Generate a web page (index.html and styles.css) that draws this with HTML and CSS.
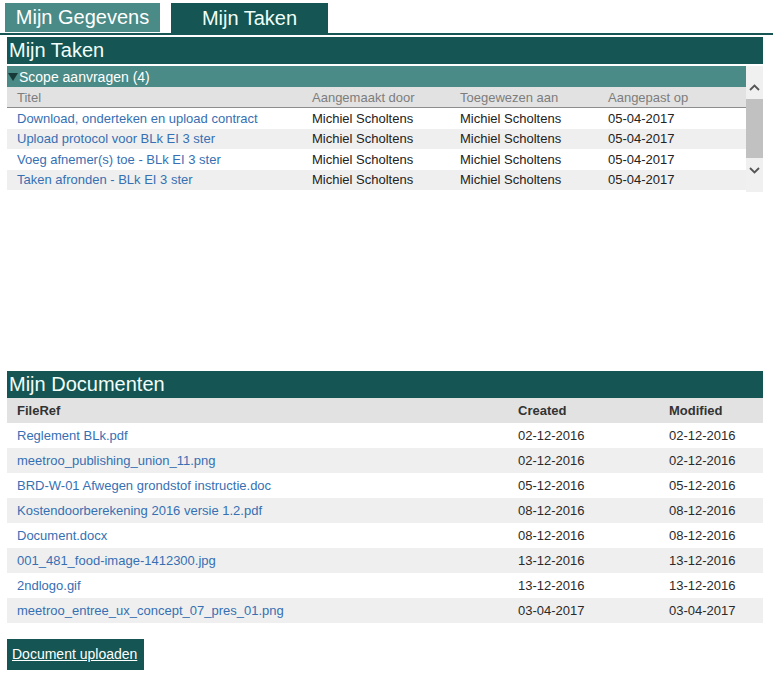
FILE: index.html
```html
<!DOCTYPE html>
<html lang="nl">
<head>
<meta charset="utf-8">
<title>Mijn Taken</title>
<link rel="stylesheet" href="styles.css">
</head>
<body>
<nav class="tabbar">
  <a class="tab tab-inactive">Mijn Gegevens</a>
  <a class="tab tab-active">Mijn Taken</a>
</nav>

<section class="panel tasks">
  <h2 class="panel-title">Mijn Taken</h2>
  <div class="scroll-wrap">
    <div class="scroll-content">
      <div class="group-bar"><span class="caret"></span>Scope aanvragen (4)</div>
      <div class="trow thead">
        <div>Titel</div><div>Aangemaakt door</div><div>Toegewezen aan</div><div>Aangepast op</div>
      </div>
      <div class="trow">
        <a class="link">Download, onderteken en upload contract</a><div>Michiel Scholtens</div><div>Michiel Scholtens</div><div>05-04-2017</div>
      </div>
      <div class="trow alt">
        <a class="link">Upload protocol voor BLk EI 3 ster</a><div>Michiel Scholtens</div><div>Michiel Scholtens</div><div>05-04-2017</div>
      </div>
      <div class="trow">
        <a class="link">Voeg afnemer(s) toe - BLk EI 3 ster</a><div>Michiel Scholtens</div><div>Michiel Scholtens</div><div>05-04-2017</div>
      </div>
      <div class="trow alt">
        <a class="link">Taken afronden - BLk EI 3 ster</a><div>Michiel Scholtens</div><div>Michiel Scholtens</div><div>05-04-2017</div>
      </div>
    </div>
    <div class="scrollbar">
      <svg class="arrow arrow-up" width="11" height="7" viewBox="0 0 11 7"><path d="M1 6 L5.5 1.5 L10 6" fill="none" stroke="#555" stroke-width="1.8"/></svg>
      <div class="track"><div class="thumb"></div></div>
      <svg class="arrow arrow-down" width="11" height="7" viewBox="0 0 11 7"><path d="M1 1 L5.5 5.5 L10 1" fill="none" stroke="#555" stroke-width="1.8"/></svg>
    </div>
  </div>
</section>

<section class="panel docs">
  <h2 class="panel-title">Mijn Documenten</h2>
  <div class="drow dhead"><div>FileRef</div><div>Created</div><div>Modified</div></div>
  <div class="drow"><a class="link">Reglement BLk.pdf</a><div>02-12-2016</div><div>02-12-2016</div></div>
  <div class="drow alt"><a class="link">meetroo_publishing_union_11.png</a><div>02-12-2016</div><div>02-12-2016</div></div>
  <div class="drow"><a class="link">BRD-W-01 Afwegen grondstof instructie.doc</a><div>05-12-2016</div><div>05-12-2016</div></div>
  <div class="drow alt"><a class="link">Kostendoorberekening 2016 versie 1.2.pdf</a><div>08-12-2016</div><div>08-12-2016</div></div>
  <div class="drow"><a class="link">Document.docx</a><div>08-12-2016</div><div>08-12-2016</div></div>
  <div class="drow alt"><a class="link">001_481_food-image-1412300.jpg</a><div>13-12-2016</div><div>13-12-2016</div></div>
  <div class="drow"><a class="link">2ndlogo.gif</a><div>13-12-2016</div><div>13-12-2016</div></div>
  <div class="drow alt"><a class="link">meetroo_entree_ux_concept_07_pres_01.png</a><div>03-04-2017</div><div>03-04-2017</div></div>
  <div class="actions"><a class="btn">Document uploaden</a></div>
</section>
</body>
</html>
```

FILE: styles.css
```css
* { box-sizing: border-box; }
html, body { margin: 0; padding: 0; background: #fff; }
body {
  font-family: "Liberation Sans", Arial, sans-serif;
  color: #222;
  width: 773px;
}

.tabbar {
  display: flex;
  align-items: flex-start;
  gap: 11px;
  padding: 3px 0 0 5px;
  height: 35px;
  border-bottom: 2px solid #155553;
}
.tab {
  display: flex;
  align-items: center;
  justify-content: center;
  font-size: 20px;
  color: #fff;
}
.tab-inactive {
  background: #4a8a87;
  height: 29px;
  width: 155px;
}
.tab-active {
  background: #155553;
  height: 30px;
  width: 157px;
  color: #effff8;
}

.panel { margin: 0 10px 0 7px; }
.tasks { margin-top: 2px; }
.panel-title {
  margin: 0;
  background: #155553;
  color: #f2fffa;
  font-weight: normal;
  font-size: 20px;
  height: 27px;
  line-height: 27px;
  padding-left: 2px;
}

.scroll-wrap {
  display: flex;
  margin-top: 2px;
  height: 126px;
}
.scroll-content {
  flex: 1;
  min-width: 0;
}
.group-bar {
  background: #4a8a87;
  color: #fff;
  height: 21px;
  font-size: 14px;
  padding-left: 1px;
  display: flex;
  align-items: center;
}
.caret {
  display: inline-block;
  width: 0;
  height: 0;
  border-left: 5px solid transparent;
  border-right: 5px solid transparent;
  border-top: 8px solid #173a38;
  margin-right: 1px;
}

.trow {
  display: grid;
  grid-template-columns: 295px 148px 148px 148px;
  height: 20.5px;
  align-items: center;
  font-size: 13px;
  color: #222;
}
.trow > * { padding-left: 10px; white-space: nowrap; }
.trow.thead {
  background: #e2e2e2;
  color: #7d7d7d;
  height: 21px;
  border-bottom: 1px solid #8d8d8d;
}
.alt { background: #efefef; }
.link { color: #3670b3; text-decoration: none; }

.scrollbar {
  width: 17px;
  background: #f0f0f0;
  display: flex;
  flex-direction: column;
  align-items: center;
}
.arrow { flex: none; display: block; }
.arrow-up { margin: 18px 0 8px; }
.arrow-down { margin: 4px 0 18px; }
.track { flex: 1; width: 100%; display: flex; flex-direction: column; }
.thumb { background: #c1c1c1; height: 59px; }

.docs { margin-top: 179px; }
.drow {
  display: grid;
  grid-template-columns: 501px 151px 104px;
  height: 25px;
  align-items: center;
  font-size: 13px;
  color: #2a2a2a;
}
.drow > * { padding-left: 10px; white-space: nowrap; }
.drow.dhead {
  background: #e2e2e2;
  color: #333;
  font-weight: bold;
}

.actions { padding-top: 16px; display: flex; }
.btn {
  background: #155553;
  color: #fff;
  font-size: 14px;
  text-decoration: underline;
  height: 31px;
  line-height: 31px;
  padding: 0 7px 0 5px;
}
```
